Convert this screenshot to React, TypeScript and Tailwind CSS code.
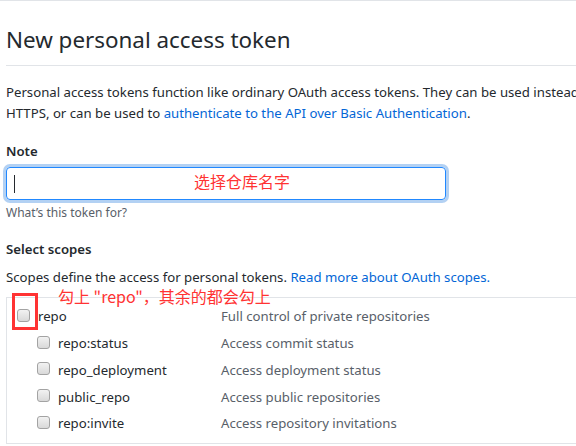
const scopes = [
  { name: "repo:status", desc: "Access commit status" },
  { name: "repo_deployment", desc: "Access deployment status" },
  { name: "public_repo", desc: "Access public repositories" },
  { name: "repo:invite", desc: "Access repository invitations" },
];

const Checkbox = () => (
  <span className="block w-[13px] h-[13px] rounded-[3px] border border-[#a3a3a3] bg-gradient-to-b from-[#f2f2f2] to-[#d9d9d9] -mt-[4px]" />
);

const App = () => {
  return (
    <div className="w-[576px] h-[446px] overflow-hidden bg-white border-t border-[#e1e4e8] font-['Noto_Sans','Noto_Sans_CJK_SC',sans-serif] text-[#24292e]">
      <div className="w-[900px] pl-[6px]">
        {/* Titre */}
        <div className="pt-[21px] pb-[8px] border-b border-[#e1e4e8] w-[570px]">
          <h1 className="text-[22.4px] leading-[35px] font-normal">New personal access token</h1>
        </div>

        <p className="mt-[16px] text-[13.2px] leading-[21px] whitespace-nowrap">
          Personal access tokens function like ordinary OAuth access tokens. They can be used instead of passwords for Git over
          <br />
          HTTPS, or can be used to{" "}
          <a className="text-[#0366d6]">authenticate to the API over Basic Authentication</a>.
        </p>

        {/* Note */}
        <div className="mt-[17px] text-[13.2px] leading-[21px] font-semibold">Note</div>
        <div className="mt-[5px] w-[440px] h-[33px] rounded-[4px] border border-[#2188ff] shadow-[0_0_0_3px_rgba(3,102,214,0.3)] flex items-center relative">
          <span className="ml-[7px] w-px h-[18px] bg-[#24292e]" />
          <span className="absolute left-[187px] top-[2px] text-[16px] leading-[22px] text-[#ff3333] font-['Noto_Sans_CJK_SC',sans-serif]">
            选择仓库名字
          </span>
        </div>
        <div className="mt-[4px] text-[12px] leading-[18px] text-[#586069]">What’s this token for?</div>

        {/* Scopes */}
        <div className="mt-[17px] text-[13.2px] leading-[21px] font-semibold">Select scopes</div>
        <p className="mt-[7px] text-[13.2px] leading-[21px]">
          Scopes define the access for personal tokens.{" "}
          <a className="text-[#0366d6]">Read more about OAuth scopes.</a>
        </p>

        <div className="relative mt-[9px] border border-[#e1e4e8] pt-[6px] pb-[5px] text-[13.2px]">
          <span className="absolute left-[51px] -top-[12px] text-[16px] leading-[20px] text-[#ff3333] font-['Noto_Sans_CJK_SC',sans-serif] whitespace-nowrap">
            勾上 "repo"，其余的都会勾上
          </span>
          <span className="absolute left-[5px] -top-[5px] w-[26px] h-[37px] border-[3px] border-[#ff3333]" />

          <div className="flex items-center h-[26.75px]">
            <div className="w-[214px] flex items-center pl-[10px] gap-[8px]">
              <Checkbox />
              <span className="text-[#24292e]">repo</span>
            </div>
            <span className="text-[#586069]">Full control of private repositories</span>
          </div>
          {scopes.map((s) => (
            <div key={s.name} className="flex items-center h-[26.75px]">
              <div className="w-[214px] flex items-center pl-[30px] gap-[8px]">
                <Checkbox />
                <span className="text-[#24292e]">{s.name}</span>
              </div>
              <span className="text-[#586069]">{s.desc}</span>
            </div>
          ))}
        </div>
      </div>
    </div>
  );
};

export default App;
